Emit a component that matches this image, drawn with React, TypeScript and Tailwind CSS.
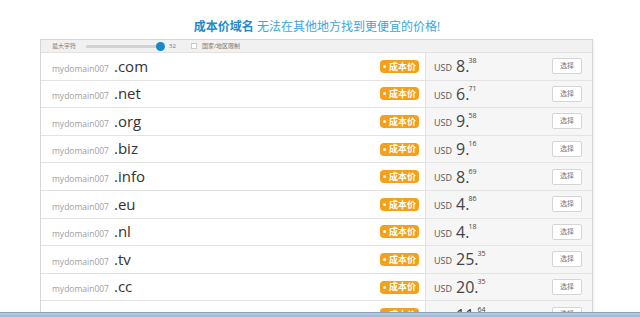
import React from "react";

interface Domain {
  tld: string;
  whole: string;
  cents: string;
}

const domains: Domain[] = [
  { tld: ".com", whole: "8", cents: "38" },
  { tld: ".net", whole: "6", cents: "71" },
  { tld: ".org", whole: "9", cents: "58" },
  { tld: ".biz", whole: "9", cents: "16" },
  { tld: ".info", whole: "8", cents: "69" },
  { tld: ".eu", whole: "4", cents: "86" },
  { tld: ".nl", whole: "4", cents: "18" },
  { tld: ".tv", whole: "25", cents: "35" },
  { tld: ".cc", whole: "20", cents: "35" },
  { tld: ".me", whole: "11", cents: "64" },
];

const font = {
  fontFamily: '"Open Sans", "Noto Sans CJK SC", sans-serif',
};

export default function App() {
  return (
    <div className="min-h-screen bg-white" style={font}>
      {/* TITLE */}
      <div className="pt-[19px] pb-[5px] text-center text-[12px] leading-[15px] pr-[6px]">
        <span className="font-bold text-[#1e8ccb]">成本价域名</span>{" "}
        <span className="text-[#3aa6dd]">无法在其他地方找到更便宜的价格!</span>
      </div>

      {/* PANEL */}
      <div className="ml-[40px] w-[553px] border border-[#d6d6d6] shadow-[1px_1px_2px_rgba(0,0,0,0.08)]">
        {/* FILTER BAR */}
        <div className="h-[13px] bg-[#f1f1f1] border-b border-[#e2e2e2] flex items-center text-[6px] text-[#777] pl-[11px]">
          <span>最大字符</span>
          <div className="ml-[10px] w-[75px] h-[3px] rounded bg-[#d3d3d3] relative">
            <div className="absolute right-[-4px] top-[-3px] w-[9px] h-[9px] rounded-full bg-[#1b86c9]" />
          </div>
          <span className="ml-[8px]">32</span>
          <span className="ml-[15px] w-[6px] h-[6px] border border-[#ccc] bg-white" />
          <span className="ml-[5px]">国家/地区限制</span>
        </div>

        {/* ROWS */}
        {domains.map((d) => (
          <div key={d.tld} className="h-[27.6px] flex border-b border-[#e3e3e3]">
            <div className="w-[384px] flex items-center pl-[11px] pr-[6px] bg-white">
              <span className="flex items-baseline -mt-[1px]">
                <span className="text-[8.5px] text-[#a0a0a0]">mydomain007</span>
                <span className="ml-[5px] text-[15px] text-[#333]">{d.tld}</span>
              </span>
              <span className="ml-auto flex items-center h-[13px] px-[3px] rounded-[4px] bg-[#f5a01b] text-white text-[9px] font-bold">
                <span className="w-[3px] h-[3px] rounded-full bg-white mr-[3px]" />
                成本价
              </span>
            </div>
            <div className="flex-1 flex items-center bg-[#f6f6f6] border-l border-[#e3e3e3] pl-[8px] pr-[10px]">
              <span className="text-[9px] text-[#555] mt-[3px]">USD</span>
              <span className="ml-[4px] flex items-start text-[#444]">
                <span className="text-[16px] leading-none">{d.whole}.</span>
                <span className="text-[7px] leading-none -ml-[1px] -mt-[1px]">{d.cents}</span>
              </span>
              <button className="ml-auto w-[30px] h-[16px] bg-white border border-[#d5d5d5] rounded-[2px] text-[7px] text-[#777]">
                选择
              </button>
            </div>
          </div>
        ))}
      </div>

      {/* TASKBAR EDGE */}
      <div className="fixed left-0 right-0 bottom-0 h-[5px] bg-gradient-to-b from-[#b8cde0] to-[#9db5cb] border-t border-[#8aa3bb]" />
    </div>
  );
}
